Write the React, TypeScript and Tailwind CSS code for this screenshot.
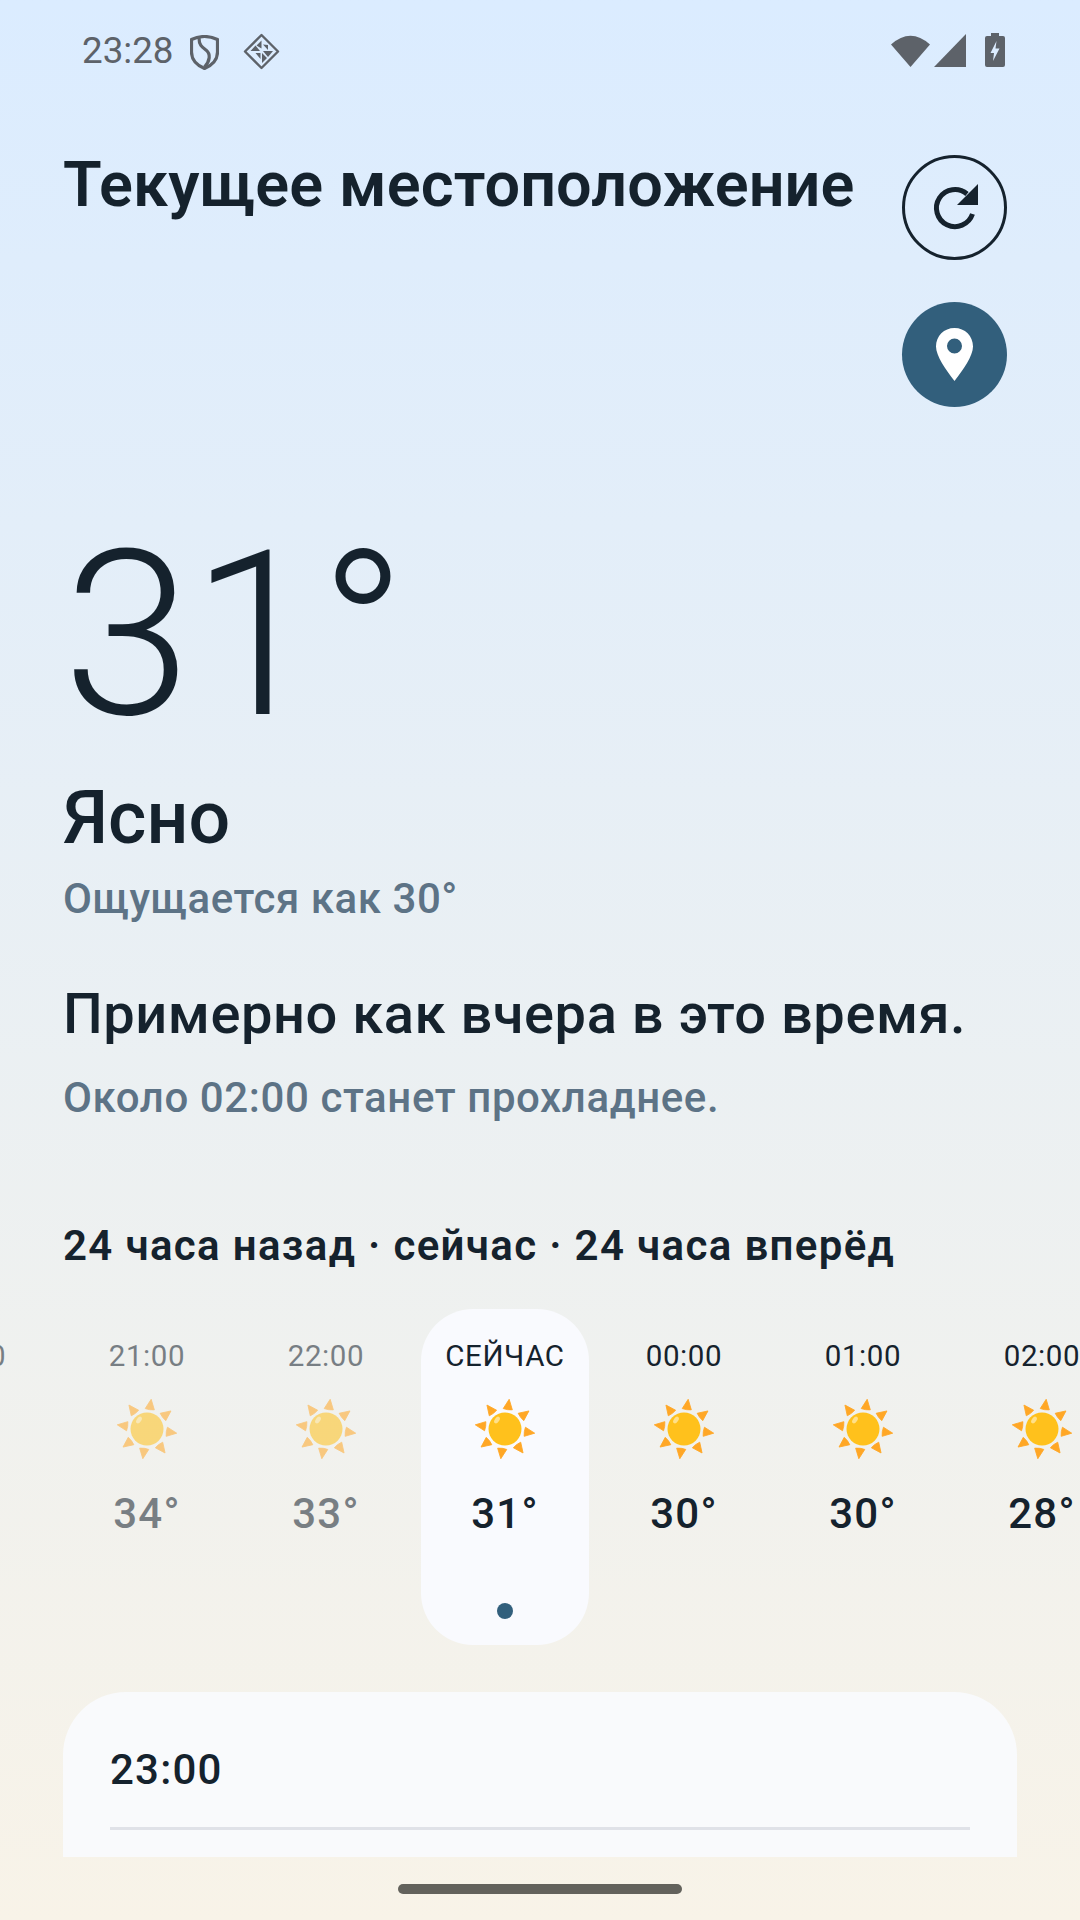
import React from 'react';

const hours = [
  { time: '20:00', temp: '35°', past: true },
  { time: '21:00', temp: '34°', past: true },
  { time: '22:00', temp: '33°', past: true },
  { time: 'СЕЙЧАС', temp: '31°', now: true },
  { time: '00:00', temp: '30°' },
  { time: '01:00', temp: '30°' },
  { time: '02:00', temp: '28°' },
];

const rays = [8, 53, 98, 143, 188, 233, 278, 323];

const Sun = () => (
  <svg viewBox="-31 -31 62 62" className="h-[62px] w-[62px]">
    {rays.map((deg) => (
      <path
        key={deg}
        d="M0 -30 L4.6 -20 Q0 -19 -4.6 -20 Z"
        fill="#ffa726"
        stroke="#ffa726"
        strokeWidth="0.8"
        strokeLinejoin="round"
        transform={`rotate(${deg})`}
      />
    ))}
    <circle cx="0" cy="0" r="16.5" fill="#ffc11c" />
    <ellipse cx="-8" cy="-9" rx="2.2" ry="3.8" fill="#ffe08a" transform="rotate(35 -8 -9)" />
  </svg>
);

const App = () => {
  return (
    <div className="relative h-[1920px] w-[1080px] overflow-hidden bg-gradient-to-b from-[#dbecff] to-[#f8f3e8] font-['Roboto',sans-serif] text-[#15222d]">
      {/* status bar */}
      <div className="flex h-[100px] items-center justify-between pl-[82px] pr-[75px] text-[#5d6269]">
        <div className="flex items-center">
          <span className="mt-[2px] text-[36.75px] leading-[40px]">23:28</span>
          <svg viewBox="0 0 29 35" className="ml-[16px] mt-[4px] h-[35px] w-[29px]" fill="none" stroke="currentColor">
            <path d="M14.5 1.5 Q21 1.5 27.5 4.5 V17 Q27.5 28 14.5 33.5 Q1.5 28 1.5 17 V4.5 Q8 1.5 14.5 1.5 Z" strokeWidth="3.2" strokeLinejoin="round" />
            <path d="M9 3 C9 10 12 12 16 15 C21 19 20 26 14.5 32" strokeWidth="3.2" />
          </svg>
          <svg viewBox="0 0 37 37" className="ml-[24px] mt-[3px] h-[37px] w-[37px]" fill="currentColor">
            <path d="M18.5 2 L35 18.5 L18.5 35 L2 18.5 Z" fill="none" stroke="currentColor" strokeWidth="2.4" strokeLinejoin="round" />
            <path d="M18.5 7.5 L18.5 15.5 L13.5 12.5 Z M7.5 18 L17 18 L12.5 12.5 Z M20 11.5 L25 12 L25 17 Z M20 18 L30 18 L25 24 Z M19 20 L19 30 L24 25 Z M12.5 20 L17.5 20 L17.5 26 Z" />
          </svg>
        </div>
        <div className="flex items-center">
          <svg viewBox="0 0 39 33" className="h-[33px] w-[39px]" fill="currentColor">
            <path d="M0 10.5 Q19.5 -7 39 10.5 L19.5 33 Z" />
          </svg>
          <svg viewBox="0 0 32 33" className="ml-[4px] h-[33px] w-[32px]" fill="currentColor">
            <path d="M32 0 V33 H0 Z" />
          </svg>
          <svg viewBox="0 0 20 34" className="ml-[19px] h-[34px] w-[20px]" fill="currentColor">
            <path fillRule="evenodd" d="M6 0 H14 V3 H18 Q20 3 20 5 V32 Q20 34 18 34 H2 Q0 34 0 32 V5 Q0 3 2 3 H6 Z M11.5 8 L5.5 20 H9 L8 28 L14.5 15.5 H10.5 Z" />
          </svg>
        </div>
      </div>

      {/* header */}
      <div className="mt-[55px] flex items-start justify-between pl-[63px] pr-[73px]">
        <h1 className="text-[63px] font-semibold leading-[60px] tracking-[0.1px]">Текущее местоположение</h1>
        <div className="flex flex-col gap-[42px]">
          <div className="h-[105px] w-[105px] rounded-full border-[3px] border-[#15222d]">
            <svg viewBox="3 3 99 99" className="h-full w-full" fill="none">
              <path d="M70.5 59 A18.5 18.5 0 1 1 65 39" stroke="#15222d" strokeWidth="5" />
              <path d="M76 29 V50 H55 Z" fill="#15222d" />
            </svg>
          </div>
          <div className="flex h-[105px] w-[105px] items-center justify-center rounded-full bg-[#325f7c]">
            <svg viewBox="0 0 37 53" className="h-[53px] w-[37px]">
              <path fillRule="evenodd" fill="#fff" d="M18.5 0 C8 0 0 8 0 18.5 C0 28 10 42 18.5 53 C27 42 37 28 37 18.5 C37 8 29 0 18.5 0 Z M18.5 10.5 A7.5 7.5 0 1 1 18.5 25.5 A7.5 7.5 0 1 1 18.5 10.5 Z" />
            </svg>
          </div>
        </div>
      </div>

      {/* current conditions */}
      <div className="px-[63px]">
        <div className="mt-[108px] text-[231px] font-light leading-[240px]">31°</div>
        <div className="mt-[20px] text-[73.5px] font-medium leading-[86px]">Ясно</div>
        <div className="mt-[13px] text-[42px] font-medium leading-[50px] tracking-[0.55px] text-[#5d7386]">Ощущается как 30°</div>
        <div className="mt-[59px] text-[56px] font-medium leading-[62px] tracking-[0.54px]">Примерно как вчера в это время.</div>
        <div className="mt-[28px] text-[42px] font-medium leading-[50px] tracking-[0.6px] text-[#5d7386]">Около 02:00 станет прохладнее.</div>
        <div className="mt-[100px] text-[42px] font-semibold leading-[46px] tracking-[1.34px]">24 часа назад · сейчас · 24 часа вперёд</div>
      </div>

      {/* hourly strip */}
      <div className="ml-[-116px] mt-[40px] flex w-[1300px] gap-[11px]">
        {hours.map((h) => (
          <div
            key={h.time}
            className={`flex h-[336px] w-[168px] shrink-0 flex-col items-center rounded-[52px] pt-[30px] ${h.now ? 'bg-[#f9fafe]' : ''}`}
          >
            <div className={`flex flex-col items-center ${h.past ? 'opacity-[0.55]' : ''}`}>
              <div className="text-[29.5px] leading-[34px] tracking-[0.6px]">{h.time}</div>
              <div className="mt-[25px]">
                <Sun />
              </div>
              <div className="mt-[29px] text-[42px] font-medium leading-[50px] tracking-[1.3px]">{h.temp}</div>
            </div>
            {h.now && <div className="mt-[64px] h-[16px] w-[16px] rounded-full bg-[#325f7c]" />}
          </div>
        ))}
      </div>

      {/* hour detail card, cut off by the navigation area */}
      <div className="mt-[47px] h-[165px] overflow-hidden px-[63px]">
        <div className="h-[400px] rounded-[63px] bg-[#f9fafc] px-[47px] pt-[53px]">
          <div className="text-[42px] font-medium leading-[50px] tracking-[1.2px]">23:00</div>
          <div className="mt-[32px] h-[3px] bg-[#e0e2e8]" />
        </div>
      </div>

      {/* gesture pill */}
      <div className="absolute bottom-[26px] left-[398px] h-[10px] w-[284px] rounded-full bg-[#63625c]" />
    </div>
  );
};

export default App;
